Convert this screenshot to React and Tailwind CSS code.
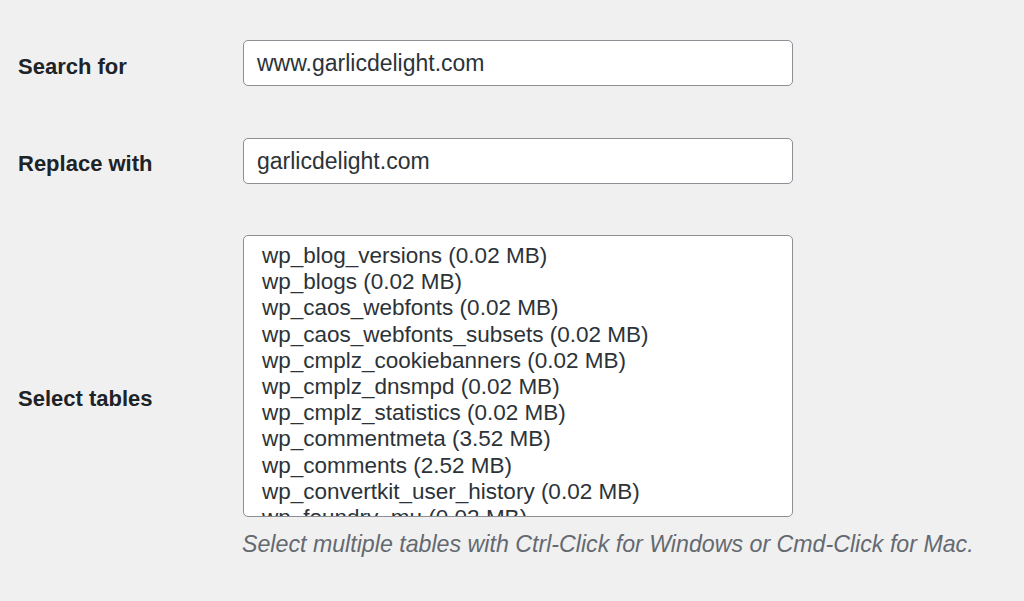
export default function App() {
  const tables = [
    "wp_blog_versions (0.02 MB)",
    "wp_blogs (0.02 MB)",
    "wp_caos_webfonts (0.02 MB)",
    "wp_caos_webfonts_subsets (0.02 MB)",
    "wp_cmplz_cookiebanners (0.02 MB)",
    "wp_cmplz_dnsmpd (0.02 MB)",
    "wp_cmplz_statistics (0.02 MB)",
    "wp_commentmeta (3.52 MB)",
    "wp_comments (2.52 MB)",
    "wp_convertkit_user_history (0.02 MB)",
    "wp_foundry_mu (0.02 MB)",
    "wp_foundry_mu_meta (0.02 MB)",
  ];
  return (
    <div
      className="w-[1024px] h-[601px] bg-[#f0f0f1] text-[#1d2327] overflow-hidden pt-[40px]"
      style={{ fontFamily: '"Liberation Sans", Arial, sans-serif' }}
    >
      <div className="flex items-center">
        <div className="w-[243px] pl-[18px] pt-[6px] text-[22px] font-bold text-[#1d2327]">
          Search for
        </div>
        <div className="w-[550px] h-[46px] bg-white border border-[#8c8f94] rounded-[5px] flex items-center pl-[13px] pt-[1px] text-[23px] text-[#2c3338]">
          www.garlicdelight.com
        </div>
      </div>

      <div className="flex items-center mt-[52px]">
        <div className="w-[243px] pl-[18px] pt-[4px] text-[22px] font-bold text-[#1d2327]">
          Replace with
        </div>
        <div className="w-[550px] h-[46px] bg-white border border-[#8c8f94] rounded-[5px] flex items-center pl-[13px] pt-[1px] text-[23px] text-[#2c3338]">
          garlicdelight.com
        </div>
      </div>

      <div className="flex items-center mt-[51px]">
        <div className="w-[243px] pl-[18px] pt-[4px] text-[22px] font-bold text-[#1d2327]">
          Select tables
        </div>
        <div className="w-[550px]">
          <div className="h-[282px] bg-white border border-[#8c8f94] rounded-[5px] overflow-hidden pl-[18px] pt-[7px] text-[22.5px] leading-[26.2px] text-[#2c3338]">
            {tables.map((t) => (
              <div key={t} className="whitespace-nowrap">{t}</div>
            ))}
          </div>
          <p className="mt-[13px] -ml-[1px] text-[23.2px] italic text-[#646970] leading-[28px] whitespace-nowrap">
            Select multiple tables with Ctrl-Click for Windows or Cmd-Click for Mac.
          </p>
        </div>
      </div>
    </div>
  );
}
